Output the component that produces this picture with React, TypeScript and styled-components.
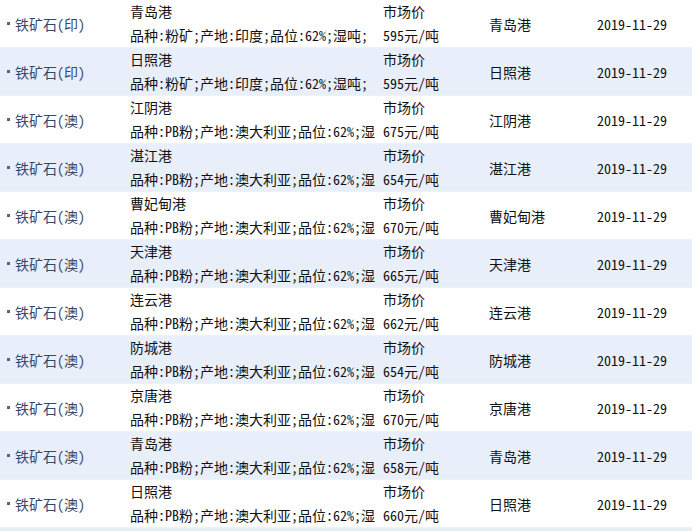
import styled, { createGlobalStyle } from 'styled-components';

const GlobalStyle = createGlobalStyle`
  html, body {
    margin: 0;
    padding: 0;
    overflow: hidden;
    background: #ffffff;
  }
  body {
    font-family: "Noto Sans Mono CJK SC", "Noto Sans CJK SC", sans-serif;
    font-size: 14px;
    color: #111111;
  }
`;

type Row = {
  kind: string;
  port: string;
  spec: string;
  price: number;
};

const PB_SPEC = '品种:PB粉;产地:澳大利亚;品位:62%;湿';
const IN_SPEC = '品种:粉矿;产地:印度;品位:62%;湿吨;';

const ROWS: Row[] = [
  { kind: '铁矿石(印)', port: '青岛港', spec: IN_SPEC, price: 595 },
  { kind: '铁矿石(印)', port: '日照港', spec: IN_SPEC, price: 595 },
  { kind: '铁矿石(澳)', port: '江阴港', spec: PB_SPEC, price: 675 },
  { kind: '铁矿石(澳)', port: '湛江港', spec: PB_SPEC, price: 654 },
  { kind: '铁矿石(澳)', port: '曹妃甸港', spec: PB_SPEC, price: 670 },
  { kind: '铁矿石(澳)', port: '天津港', spec: PB_SPEC, price: 665 },
  { kind: '铁矿石(澳)', port: '连云港', spec: PB_SPEC, price: 662 },
  { kind: '铁矿石(澳)', port: '防城港', spec: PB_SPEC, price: 654 },
  { kind: '铁矿石(澳)', port: '京唐港', spec: PB_SPEC, price: 670 },
  { kind: '铁矿石(澳)', port: '青岛港', spec: PB_SPEC, price: 658 },
  { kind: '铁矿石(澳)', port: '日照港', spec: PB_SPEC, price: 660 },
];

const App = () => {
  return (
    <>
      <GlobalStyle />
      <Table>
        {ROWS.map((row, idx) => (
          <TableRow key={row.port + idx.toString()} $striped={idx % 2 === 1}>
            <KindCell>
              <Bullet />
              {row.kind}
            </KindCell>
            <StackCell>
              <Line>{row.port}</Line>
              <Line>{row.spec}</Line>
            </StackCell>
            <StackCell>
              <Line>市场价</Line>
              <Line>{row.price}元/吨</Line>
            </StackCell>
            <CenterCell>{row.port}</CenterCell>
            <CenterCell>2019-11-29</CenterCell>
          </TableRow>
        ))}
      </Table>
      <NextRowEdge />
    </>
  );
};

export default App;

const Table = styled.div`
  display: flex;
  flex-direction: column;
  width: 692px;
`;

const TableRow = styled.div<{ $striped: boolean }>`
  display: grid;
  grid-template-columns: 130px 253px 106px 108px 1fr;
  height: 48px;
  box-sizing: border-box;
  border-bottom: 1px solid #eef2f7;
  background-color: ${({ $striped }) => ($striped ? '#e8eefa' : '#ffffff')};
`;

const KindCell = styled.div`
  display: flex;
  align-items: center;
  gap: 5px;
  padding-left: 7px;
  color: #36486c;
`;

const Bullet = styled.span`
  width: 3px;
  height: 3px;
  background-color: #5a6478;
`;

const StackCell = styled.div`
  display: flex;
  flex-direction: column;
  white-space: nowrap;
`;

const Line = styled.div`
  line-height: 23.5px;
`;

const CenterCell = styled.div`
  display: flex;
  align-items: center;
`;

const NextRowEdge = styled.div`
  height: 3px;
  background-color: #e6f0f4;
`;
